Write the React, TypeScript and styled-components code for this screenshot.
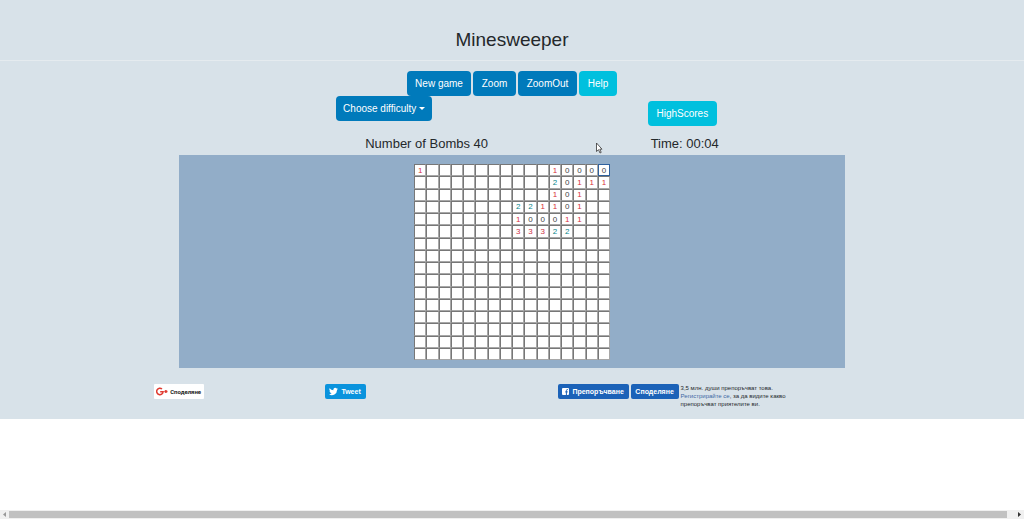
import React from "react";
import styled, { createGlobalStyle } from "styled-components";

const GlobalStyle = createGlobalStyle`
  * { box-sizing: border-box; }
  body {
    margin: 0;
    background: #fff;
    color: #24282b;
    font-family: "Liberation Sans", Arial, sans-serif;
    font-size: 10px;
  }
`;

const Page = styled.div`
  position: relative;
  display: flex;
  flex-direction: column;
  min-height: 100vh;
`;

const Game = styled.main`
  background: #d8e2e9;
  padding-bottom: 12px;
`;

const Title = styled.h1`
  margin: 0;
  padding: 28px 0 8px;
  border-bottom: 1px solid #e5ebef;
  font-size: 19px;
  line-height: 24px;
  font-weight: 400;
  text-align: center;
`;

const Toolbar = styled.div`
  display: flex;
  justify-content: center;
  gap: 2px;
  padding-top: 10px;
`;

const Button = styled.button<{ $info?: boolean; $width: number }>`
  display: flex;
  align-items: center;
  justify-content: center;
  gap: 3px;
  width: ${(p) => p.$width}px;
  height: 25px;
  padding: 0;
  border: 0;
  border-radius: 4px;
  background: ${(p) => (p.$info ? "#00c0de" : "#007abb")};
  color: #fff;
  font-family: inherit;
  font-size: 10px;
  line-height: 12px;
  white-space: nowrap;
`;

const Caret = styled.span`
  border: 3px solid transparent;
  border-top-color: #fff;
  border-bottom: 0;
`;

const Options = styled.div`
  display: flex;
  justify-content: space-between;
  align-items: flex-start;
  width: 65%;
  margin: 0 auto;
  padding: 0 128px 0 157px;
`;

const ScoresSlot = styled.div`
  padding-top: 5px;
`;

const Stats = styled.div`
  display: flex;
  justify-content: space-between;
  width: 65%;
  margin: 0 auto;
  padding: 10px 126px 3px 186px;
  font-size: 13px;
  line-height: 16px;
`;

const Board = styled.section`
  width: 65%;
  margin: 0 auto;
  padding: 9px 0 8px;
  background: #92adc8;
`;

const Field = styled.div`
  display: grid;
  grid-template-columns: repeat(16, 1fr);
  grid-template-rows: repeat(16, 1fr);
  width: 196px;
  height: 196px;
  margin: 0 auto;
`;

const tones: Record<string, string> = {
  "0": "#3f4448",
  "1": "#d8303c",
  "2": "#08868a",
  "3": "#cc3048",
};

const Cell = styled.input<{ $active: boolean }>`
  width: 100%;
  height: 100%;
  min-width: 0;
  padding: 0;
  border: 1px solid;
  border-color: ${(p) => (p.$active ? "#2f619e" : "#777 #a8a8a8 #a8a8a8 #777")};
  border-radius: 0;
  outline: 0;
  background: #fff;
  color: ${(p) => tones[String(p.value)] ?? "#333"};
  font-family: inherit;
  font-size: 8px;
  text-align: center;
`;

const Social = styled.footer`
  display: grid;
  grid-template-columns: 171px 233px auto;
  align-items: start;
  padding: 16px 0 0 15%;
`;

const ShareButton = styled.button<{ $bg: string; $fg: string; $width: number }>`
  display: flex;
  align-items: center;
  justify-content: center;
  gap: 3px;
  width: ${(p) => p.$width}px;
  height: 15px;
  padding: 0;
  border: 0;
  border-radius: 2px;
  background: ${(p) => p.$bg};
  color: ${(p) => p.$fg};
  font-family: inherit;
  font-size: 7px;
  line-height: 8px;
  font-weight: 700;
  white-space: nowrap;
`;

const GoogleButton = styled(ShareButton)`
  gap: 2px;
  border-radius: 1px;
  font-family: Roboto, sans-serif;
  font-size: 6px;
`;

const Recommend = styled.div`
  display: flex;
  gap: 2px;
`;

const Note = styled.p`
  margin: 0;
  height: 23px;
  font-size: 6px;
  line-height: 8px;
  white-space: nowrap;
`;

const Link = styled.a`
  color: #3d68a5;
  text-decoration: none;
`;

const Pointer = styled.svg`
  position: absolute;
  left: 595px;
  top: 142px;
  width: 8px;
  height: 12px;
`;

const ScrollTrack = styled.div`
  display: flex;
  align-items: center;
  justify-content: space-between;
  height: 9px;
  margin-top: auto;
  padding: 0 2px;
  background: #f0f0f0;
`;

const Thumb = styled.div`
  flex: 1;
  height: 7px;
  margin: 0 10px 0 2px;
  background: #c1c1c1;
`;

const size = 16;
const rows: string[] = [
  "1..........10000",
  "...........20111",
  "...........101..",
  "........221101..",
  "........100011..",
  "........33322...",
];

export default function App() {
  const cells = Array.from({ length: size * size }, (_, i) => {
    const value = rows[Math.floor(i / size)]?.[i % size] ?? ".";
    return value === "." ? "" : value;
  });

  return (
    <Page>
      <GlobalStyle />
      <Game>
        <Title>Minesweeper</Title>
        <Toolbar>
          <Button $width={64}>New game</Button>
          <Button $width={43}>Zoom</Button>
          <Button $width={59}>ZoomOut</Button>
          <Button $width={38} $info>Help</Button>
        </Toolbar>
        <Options>
          <Button $width={96} aria-haspopup="menu">Choose difficulty<Caret /></Button>
          <ScoresSlot>
            <Button $width={69} $info>HighScores</Button>
          </ScoresSlot>
        </Options>
        <Stats>
          <span>Number of Bombs 40</span>
          <span>Time: 00:04</span>
        </Stats>
        <Board>
          <Field>
            {cells.map((value, i) => (
              <Cell
                key={i}
                value={value}
                readOnly
                $active={i === size - 1}
                aria-label={`Row ${Math.floor(i / size) + 1}, column ${(i % size) + 1}`}
              />
            ))}
          </Field>
        </Board>
        <Social>
          <GoogleButton $bg="#fff" $fg="#222" $width={50}>
            <svg width="12" height="9" viewBox="0 0 12 9" fill="none" stroke="#df3b31" strokeWidth="1.5" aria-hidden="true">
              <path d="M6 2A3.2 3.2 0 1 0 7.1 4.7H4.2M8.3 4.5h3.2M9.9 2.9v3.2" />
            </svg>
            Споделяне
          </GoogleButton>
          <ShareButton $bg="#0a93dd" $fg="#fff" $width={41}>
            <svg width="9" height="9" viewBox="0 0 24 24" fill="#fff" aria-hidden="true">
              <path d="M24 4.6a10 10 0 0 1-2.8.8 5 5 0 0 0 2.1-2.7 10 10 0 0 1-3.1 1.2 4.9 4.9 0 0 0-8.4 4.5A14 14 0 0 1 1.7 3.1a4.9 4.9 0 0 0 1.5 6.6 5 5 0 0 1-2.2-.6 4.9 4.9 0 0 0 3.9 4.9 5 5 0 0 1-2.2.1 4.9 4.9 0 0 0 4.6 3.4A9.9 9.9 0 0 1 0 19.5a14 14 0 0 0 21.5-12.4A10 10 0 0 0 24 4.6z" />
            </svg>
            Tweet
          </ShareButton>
          <Recommend>
            <ShareButton $bg="#1b62b8" $fg="#fff" $width={71}>
              <svg width="7" height="7" viewBox="0 0 7 7" aria-hidden="true">
                <rect width="7" height="7" rx="1" fill="#fff" />
                <path d="M6 1.6H5.3Q4.4 1.6 4.4 2.5V7M3.2 3.9H5.8" fill="none" stroke="#1b62b8" />
              </svg>
              Препоръчване
            </ShareButton>
            <ShareButton $bg="#1b62b8" $fg="#fff" $width={48}>Споделяне</ShareButton>
            <Note>
              3,5 млн. души препоръчват това.<br />
              <Link href="#register">Регистрирайте се</Link>, за да видите какво<br />
              препоръчват приятелите ви.
            </Note>
          </Recommend>
        </Social>
      </Game>
      <Pointer viewBox="0 0 8 12" aria-hidden="true">
        <path d="M1.5 1v8.5l2-1.8L5 11l1.2-.6L4.8 7.2H7z" fill="#fff" stroke="#333" strokeWidth=".8" />
      </Pointer>
      <ScrollTrack aria-hidden="true">
        <svg width="5" height="5" viewBox="0 0 5 5"><path d="M4 0v5L1 2.5z" fill="#999" /></svg>
        <Thumb />
        <svg width="5" height="5" viewBox="0 0 5 5"><path d="M1 0v5l3-2.5z" fill="#333" /></svg>
      </ScrollTrack>
    </Page>
  );
}
